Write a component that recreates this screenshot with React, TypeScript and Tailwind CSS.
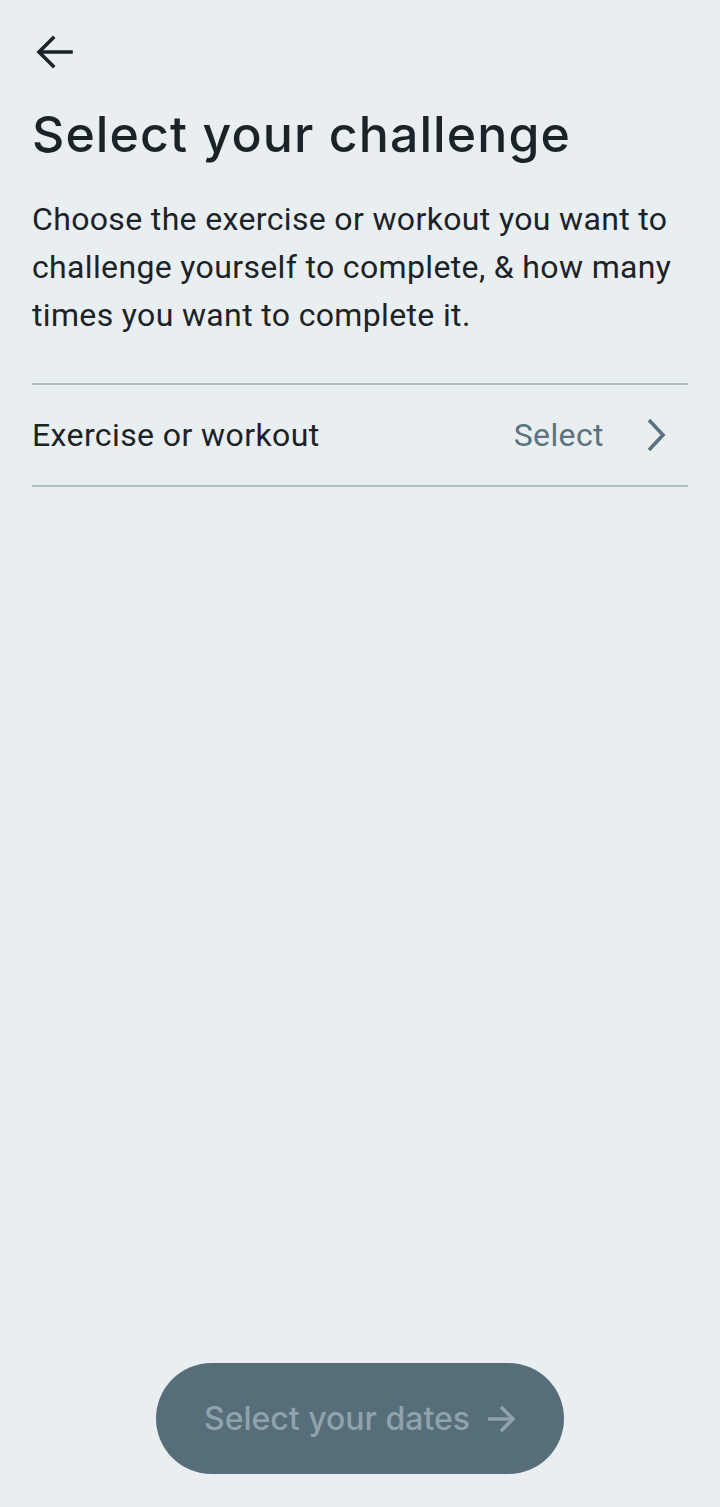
export default function App() {
  return (
    <div
      className="flex min-h-[1507px] w-[720px] flex-col bg-[#e9eef1] px-8 text-[#1b2328]"
      style={{ fontFamily: 'Roboto, "Liberation Sans", sans-serif' }}
    >
      {/* Back */}
      <button className="mt-[34px] flex h-[36px] w-[44px] items-center">
        <svg width="44" height="36" viewBox="0 0 44 36" fill="none" stroke="#1b2328" strokeWidth="3.6" strokeLinecap="square">
          <path d="M8 18 H39" />
          <path d="M21 4 L7 18 L21 32" strokeLinejoin="miter" />
        </svg>
      </button>

      {/* Title */}
      <h1
        className="mt-[36px] text-[50px] font-medium leading-[56px] tracking-[1.1px]"
        style={{ fontFamily: 'Inter, sans-serif' }}
      >
        Select your challenge
      </h1>

      <p className="mt-[33px] text-[32px] leading-[48px] tracking-[0.35px] text-[#1b2328]">
        Choose the exercise or workout you want to challenge yourself to complete, &amp; how many
        times you want to complete it.
      </p>

      {/* Row */}
      <div className="mt-[44px] flex h-[104px] items-center border-y-2 border-[#b0bec5]">
        <span className="flex-1 text-[32px] tracking-[0.4px]">Exercise or workout</span>
        <span className="text-[32px] tracking-[0.4px] text-[#5a737e]">Select</span>
        <svg width="22" height="34" viewBox="0 0 22 34" fill="none" stroke="#5a737e" strokeWidth="3.6" className="ml-[42px] mr-[20px]">
          <path d="M3 2 L17 17 L3 32" />
        </svg>
      </div>

      <div className="flex-1" />

      {/* Footer button */}
      <div className="mb-[33px] flex justify-center">
        <button
          className="flex h-[111px] w-[408px] items-center justify-center gap-[16px] rounded-full bg-[#566e79] text-[32px] font-medium text-[#8fa3ac]"
          style={{ fontFamily: 'Inter, sans-serif' }}
        >
          Select your dates
          <svg width="30" height="28" viewBox="0 0 30 28" fill="none" stroke="#8fa3ac" strokeWidth="3.4">
            <path d="M2 14 H27" />
            <path d="M15 2 L27 14 L15 26" />
          </svg>
        </button>
      </div>
    </div>
  );
}
